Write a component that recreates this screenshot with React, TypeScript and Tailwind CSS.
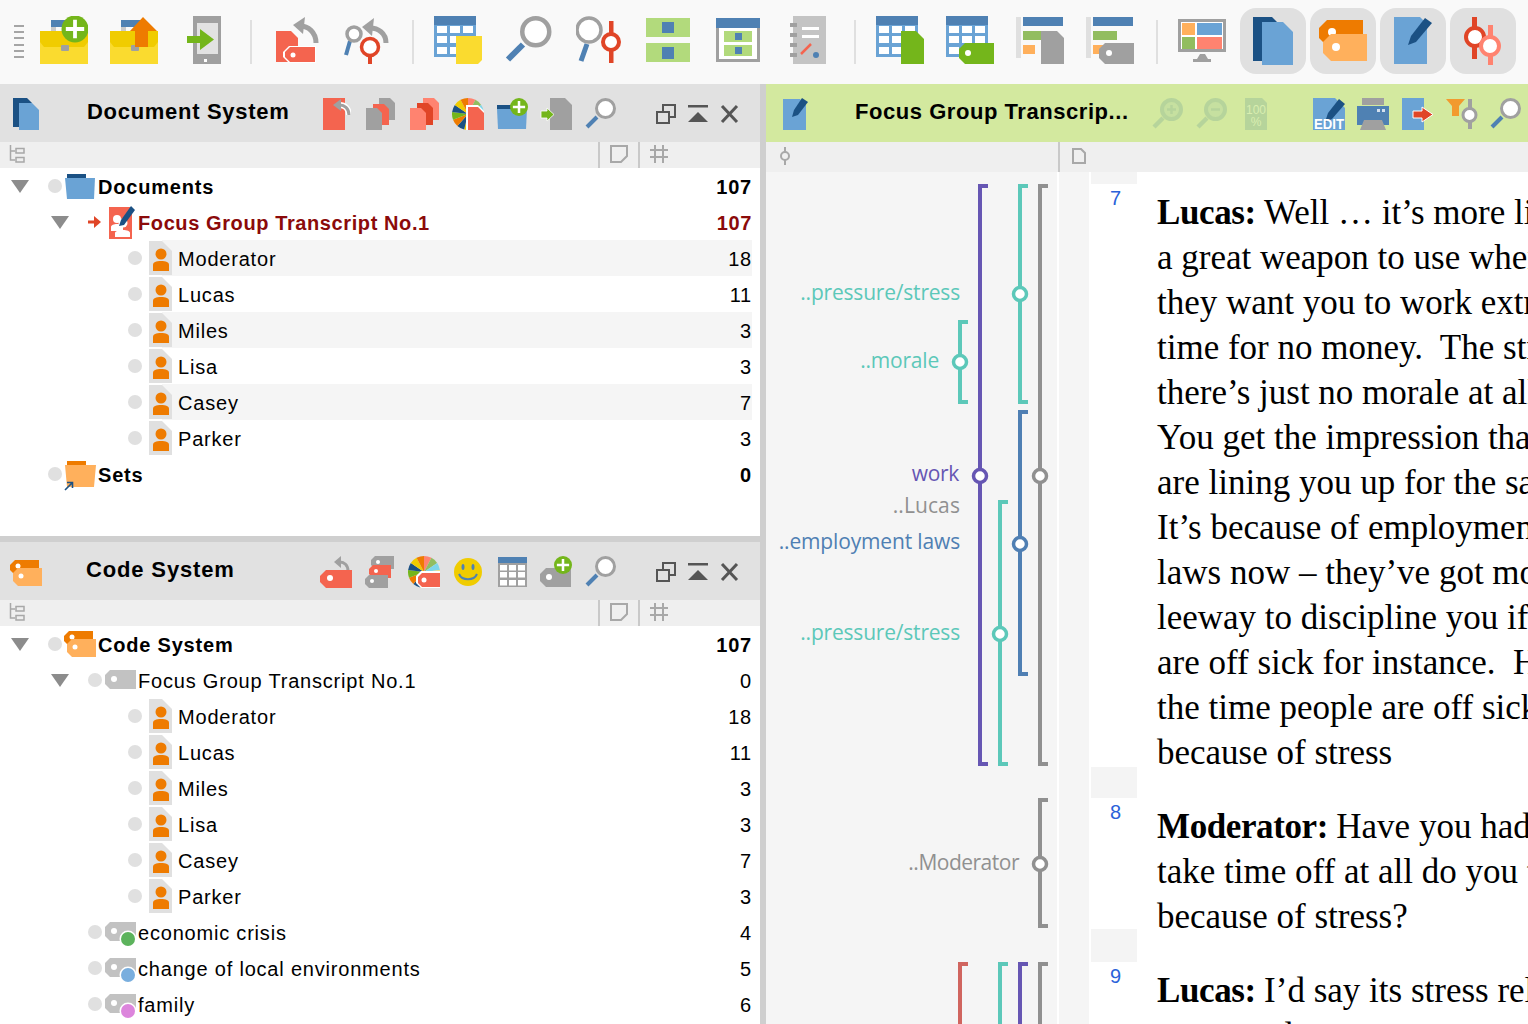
import React from 'react';

const RED = '#f4644f';
const DRED = '#e04527';
const SALMON = '#ff8370';
const GRAY = '#a0a0a0';
const BLUE = '#4f81b3';
const LBLUE = '#6aa3d5';
const DBLUE = '#1b5184';
const GREEN = '#74b61b';
const LGREEN = '#b2da7c';
const MGREEN = '#92bd5f';
const ORANGE = '#ee7b00';
const LORANGE = '#ffb05c';
const FADED = '#b6d49b';

// box is "x y w h" in picture coordinates, so the paths below can use them directly
function Ic({ box, className, scale = 1, children }: { box: string; className?: string; scale?: number; children: React.ReactNode }) {
  const [, , w, h] = box.split(' ').map(Number);
  return (
    <svg width={w * scale} height={h * scale} viewBox={box} className={`shrink-0 ${className ?? ''}`}>
      {children}
    </svg>
  );
}

function tagPts(x: number, y: number, w: number, h: number, c = 5) {
  return `${x + c},${y} ${x + w},${y} ${x + w},${y + h} ${x + c},${y + h} ${x},${y + h - c} ${x},${y + c}`;
}

function docPts(x: number, y: number, w: number, h: number, c = 7) {
  return `${x},${y} ${x + w - c},${y} ${x + w},${y + c} ${x + w},${y + h} ${x},${y + h}`;
}

function Plus({ cx, cy, r }: { cx: number; cy: number; r: number }) {
  return (
    <>
      <circle cx={cx} cy={cy} r={r} fill={GREEN} />
      <path d={`M${cx - r * 0.68} ${cy}H${cx + r * 0.68}M${cx} ${cy - r * 0.68}V${cy + r * 0.68}`} stroke="#fff" strokeWidth={r * 0.28} />
    </>
  );
}

function Mag({ className, scale = 1 }: { className?: string; scale?: number }) {
  return (
    <Ic box="0 0 32 32" className={className} scale={scale}>
      <path d="M12 19L2 29" stroke={BLUE} strokeWidth="4" />
      <circle cx="20.5" cy="10.5" r="9" fill="#fff" stroke={GRAY} strokeWidth="3" />
    </Ic>
  );
}

function ZoomFaded({ className, minus }: { className?: string; minus?: boolean }) {
  return (
    <Ic box="0 0 32 32" className={className}>
      <path d="M11 20L2 29" stroke={FADED} strokeWidth="4.5" />
      <circle cx="19.5" cy="11.5" r="9.5" fill="#c6e0a0" stroke={FADED} strokeWidth="4" />
      <path d={minus ? 'M15 11.5H24' : 'M15 11.5H24M19.5 7V16'} stroke={FADED} strokeWidth="2.5" />
    </Ic>
  );
}

function Case({ children, box }: { box: string; children: React.ReactNode }) {
  const x = Number(box.split(' ')[0]);
  return (
    <Ic box={box} className="ml-[22px]">
      <g transform={`translate(${x} 16)`}>
        <rect x="11" y="4" width="22" height="7" fill={BLUE} />
        <rect x="11" y="11" width="5" height="5" fill="#c9c9c9" />
        <rect x="0" y="15" width="48" height="33" fill="#fadb2f" />
        <polygon points="0,15 48,15 48,26 44,31 4,31 0,26" fill="#f0cc00" />
        <rect x="21" y="29" width="8" height="6" rx="1" fill={GRAY} />
      </g>
      {children}
    </Ic>
  );
}

function TableShape({ x, y }: { x: number; y: number }) {
  const cols = [3, 16, 29];
  const rows = [10, 20, 31];
  return (
    <g transform={`translate(${x} ${y})`}>
      <rect x="0" y="0" width="42" height="41" fill={LBLUE} />
      <rect x="0" y="0" width="42" height="9" fill={BLUE} />
      {cols.map((c) => rows.map((r) => <rect key={`${c}-${r}`} x={c} y={r} width="10" height="7" fill="#fff" />))}
    </g>
  );
}

function Pie({ cx, cy, r }: { cx: number; cy: number; r: number }) {
  const colors = ['#ff8370', '#92bd5f', '#7ed6ea', '#f2e27a', '#6aa3d5', '#f0cc00', '#f0cc00', '#1b5184', '#ee7b00', '#74b61b', '#1b5184', '#f0cc00', '#ee7b00'];
  return (
    <>
      {colors.map((c, i) => {
        const a0 = (i / colors.length) * Math.PI * 2 - Math.PI / 2;
        const a1 = ((i + 1) / colors.length) * Math.PI * 2 - Math.PI / 2;
        return (
          <path
            key={i}
            d={`M${cx} ${cy}L${cx + r * Math.cos(a0)} ${cy + r * Math.sin(a0)}A${r} ${r} 0 0 1 ${cx + r * Math.cos(a1)} ${cy + r * Math.sin(a1)}Z`}
            fill={c}
          />
        );
      })}
    </>
  );
}

function CodesIcon({ className }: { className?: string }) {
  return (
    <Ic box="0 0 32 28" className={className}>
      <polygon points={tagPts(0, 1, 29, 15, 5)} fill={ORANGE} />
      <circle cx="8" cy="7" r="2.5" fill="#fff" />
      <polygon points={tagPts(3, 9, 29, 18, 5)} fill={LORANGE} />
      <circle cx="11" cy="17" r="2.5" fill="#fff" />
    </Ic>
  );
}

function FolderIcon({ className, orange }: { className?: string; orange?: boolean }) {
  return (
    <Ic box="0 0 32 36" className={className}>
      <rect x="3" y={orange ? 5 : 6} width="19" height="5" fill={orange ? ORANGE : DBLUE} />
      <polygon points={orange ? '1,9 32,9 30,31 3,31' : '1,10 31,10 30,31 3,31'} fill={orange ? LORANGE : LBLUE} />
      {orange && <path d="M1 34L8 27M3 26.5H8.5V32" fill="none" stroke={DBLUE} strokeWidth="1.6" />}
    </Ic>
  );
}

function PersonDoc({ className }: { className?: string }) {
  return (
    <Ic box="0 0 23 34" className={className}>
      <polygon points={docPts(0, 0, 23, 34, 10)} fill="#e0e0e0" />
      <circle cx="12" cy="13" r="5.5" fill={ORANGE} />
      <path d="M4 30V24C4 21 7 20 12 20C17 20 20 21 20 24V30Z" fill={ORANGE} />
    </Ic>
  );
}

function FocusDoc({ className }: { className?: string }) {
  return (
    <Ic box="0 0 27 33" className={className}>
      <rect x="0" y="1" width="23" height="32" fill={RED} />
      <circle cx="8" cy="13" r="4" fill="#fff" />
      <path d="M2 25V21C2 19 5 18 8 18C11 18 14 19 14 21V25Z" fill="#fff" />
      <circle cx="14" cy="17" r="4.5" fill="#fff" />
      <path d="M6 31V27C6 25 10 24 14 24C18 24 21 25 21 27V31Z" fill="#fff" />
      <polygon points="22,0 26,4 15,19 10,20 12,14" fill={DBLUE} />
    </Ic>
  );
}

function GrayTag({ className, dot }: { className?: string; dot?: string }) {
  return (
    <Ic box="0 0 31 36" className={className}>
      <polygon points={tagPts(0, 8, 31, 19, 5)} fill="#c2c2c2" />
      <circle cx="9" cy="17" r="3" fill="#fff" />
      {dot && (
        <>
          <circle cx="23" cy="25" r="8.5" fill="#fff" />
          <circle cx="23" cy="25" r="7" fill={dot} />
        </>
      )}
    </Ic>
  );
}

function Tree() {
  return (
    <Ic box="0 0 16 18" className="ml-[9px] -mt-[3px]">
      <path d="M1.5 0V15H6M1.5 6H6M7 3.5H15V8H7ZM7 12.5H15V17H7Z" fill="none" stroke="#a8a8a8" strokeWidth="1.5" />
    </Ic>
  );
}

function WindowButtons() {
  return (
    <>
      <Ic box="0 0 20 20" className="ml-[39px] mt-[6px]">
        <path d="M1 8H13V19H1ZM7 7V1H19V13H13" fill="none" stroke="#555" strokeWidth="2" />
      </Ic>
      <Ic box="0 0 20 20" className="ml-[12px] mt-[6px]">
        <rect x="0" y="1" width="20" height="2.5" fill="#555" />
        <polygon points="10,8 20,18 0,18" fill="#555" />
      </Ic>
      <Ic box="0 0 20 20" className="ml-[11px] mt-[6px]">
        <path d="M3 2L18 18M18 2L3 18" stroke="#555" strokeWidth="3" />
      </Ic>
    </>
  );
}

function Row({ pad, tri, dot = true, lead, icon, label, count, bold, dark, striped, labelClass }: {
  pad: string;
  tri?: boolean;
  dot?: boolean;
  lead?: React.ReactNode;
  icon: React.ReactNode;
  label: string;
  count: number;
  bold?: boolean;
  dark?: boolean;
  striped?: boolean;
  labelClass: string;
}) {
  return (
    <div className={`flex h-9 w-[752px] shrink-0 items-center text-[20px] ${dark ? 'tracking-[0.6px]' : 'tracking-[0.8px]'} ${pad} ${striped ? 'bg-[linear-gradient(to_right,#fff_162px,#f5f5f5_162px)]' : ''} ${bold ? 'font-bold' : ''} ${dark ? 'text-[#8b0a0a]' : 'text-black'}`}>
      {tri && (
        <svg width="18" height="13" className="mr-[19px] shrink-0">
          <polygon points="0,0 18,0 9,13" fill="#8c8c8c" />
        </svg>
      )}
      {lead}
      {dot && <span className="h-[14px] w-[14px] shrink-0 rounded-full bg-[#e0e0e0]" />}
      {icon}
      <span className={`mt-[2px] ${labelClass}`}>{label}</span>
      <span className="ml-auto mt-[2px]">{count}</span>
    </div>
  );
}

function ColumnBar({ className }: { className: string }) {
  return (
    <div className={`flex h-[26px] items-center bg-[#efefef] ${className}`}>
      <Tree />
      <div className="ml-[573px] h-full w-[2px] bg-[#c9c9c9]" />
      <Ic box="0 0 18 18" className="ml-[10px] -mt-[3px]">
        <path d="M1 1H17V11L11 17H1Z" fill="none" stroke="#a8a8a8" strokeWidth="2" />
      </Ic>
      <div className="ml-[10px] h-full w-[2px] bg-[#c9c9c9]" />
      <Ic box="0 0 18 18" className="ml-[10px] -mt-[3px]">
        <path d="M5 0V18M13 0V18M0 5H18M0 12H18" stroke="#a8a8a8" strokeWidth="2" />
      </Ic>
    </div>
  );
}

const people: { name: string; n: number }[] = [
  { name: 'Moderator', n: 18 },
  { name: 'Lucas', n: 11 },
  { name: 'Miles', n: 3 },
  { name: 'Lisa', n: 3 },
  { name: 'Casey', n: 7 },
  { name: 'Parker', n: 3 },
];

function Toolbar() {
  return (
    <div className="flex h-[84px] shrink-0 items-start bg-[#f9f9f9] pl-[14px] pt-[16px]">
      <Ic box="0 0 10 34" className="mt-[9px]">
        {[0, 6, 12, 19, 25, 31].map((y) => <rect key={y} x="0" y={y} width="10" height="2" fill="#a5a5a5" />)}
      </Ic>
      <div className="-ml-[6px]">
        <Case box="40 16 48 48"><Plus cx={75} cy={29} r={13.5} /></Case>
      </div>
      <Case box="110 16 48 48">
        <polygon points="143,17 157,31 148,31 148,47 135,47 135,31 130,31" fill={ORANGE} />
      </Case>
      <Ic box="187 16 34 48" className="ml-[29px]">
        <rect x="193" y="16" width="28" height="48" fill={GRAY} />
        <rect x="197" y="23" width="21" height="31" fill="#e2e2e2" />
        <rect x="204" y="59" width="3" height="3" fill="#fff" />
        <polygon points="187,36 200,36 200,29 214,39.5 200,50 200,43 187,43" fill={GREEN} />
      </Ic>
      <div className="ml-[29px] mt-[4px] h-[44px] w-[2px] bg-[#e0e0e0]" />
      <Ic box="276 16 44 48" className="ml-[24px]">
        <polygon points={docPts(276, 31, 22, 31)} fill={RED} />
        <polygon points={tagPts(283, 46, 33, 17, 6)} fill="#fff" />
        <polygon points={tagPts(285, 47, 30, 15, 5)} fill={RED} />
        <circle cx="293" cy="55" r="2.5" fill="#fff" />
        <path d="M316 43C316 32 308 26 300 26" fill="none" stroke={GRAY} strokeWidth="5" />
        <polygon points="293,25 305,17 303,34" fill={GRAY} />
      </Ic>
      <Ic box="343 16 46 48" className="ml-[23px]">
        <path d="M386 43C386 33 378 28 370 28" fill="none" stroke={GRAY} strokeWidth="5" />
        <polygon points="362,27 374,18 372,36" fill={GRAY} />
        <path d="M350 41L346 55" stroke={BLUE} strokeWidth="4" />
        <circle cx="354" cy="34" r="7" fill="#fff" stroke={GRAY} strokeWidth="3.5" />
        <rect x="368" y="50" width="4" height="14" fill={DRED} />
        <circle cx="370" cy="47" r="8.5" fill="#fff" stroke={DRED} strokeWidth="3.5" />
      </Ic>
      <div className="ml-[23px] mt-[4px] h-[44px] w-[2px] bg-[#e0e0e0]" />
      <Ic box="434 16 48 48" className="ml-[20px]">
        <TableShape x={434} y={16} />
        <polygon points="456,36 482,36 482,60 478,64 456,64" fill="#fadb2f" />
      </Ic>
      <Mag className="ml-[23px]" scale={1.5} />
      <Ic box="576 16 46 48" className="ml-[23px]">
        <path d="M587 44L581 61" stroke={BLUE} strokeWidth="5" />
        <circle cx="589" cy="30" r="12" fill="#fff" stroke={GRAY} strokeWidth="3.5" />
        <rect x="609" y="21" width="4.5" height="42" fill={DRED} />
        <circle cx="611" cy="42" r="8" fill="#fff" stroke={DRED} strokeWidth="4" />
      </Ic>
      <Ic box="646 18 44 44" className="ml-[24px] mt-[2px]">
        <rect x="646" y="18" width="44" height="19" fill={LGREEN} />
        <rect x="646" y="43" width="44" height="19" fill={LGREEN} />
        <rect x="662" y="22" width="12" height="11" fill={BLUE} />
        <rect x="662" y="47" width="12" height="12" fill={BLUE} />
      </Ic>
      <Ic box="716 18 44 44" className="ml-[26px] mt-[2px]">
        <rect x="716" y="18" width="44" height="44" fill={GRAY} />
        <rect x="719" y="28" width="38" height="31" fill="#fff" />
        <rect x="716" y="18" width="44" height="10" fill={BLUE} />
        <rect x="724" y="31" width="28" height="11" fill={LGREEN} />
        <rect x="724" y="45" width="28" height="11" fill={LGREEN} />
        <rect x="735" y="33" width="7" height="7" fill={BLUE} />
        <rect x="735" y="47" width="7" height="7" fill={BLUE} />
      </Ic>
      <Ic box="790 16 36 48" className="ml-[30px]">
        <rect x="793" y="16" width="33" height="48" fill="#c4c4c4" />
        {[25, 35, 45, 55].map((y) => <rect key={y} x="790" y={y - 2} width="7" height="4" fill={GRAY} />)}
        <rect x="802" y="27" width="17" height="3" fill="#fff" />
        <rect x="802" y="35" width="17" height="3" fill="#fff" />
        <path d="M801 54L811 44" stroke={RED} strokeWidth="2.5" />
        <circle cx="816" cy="55" r="3" fill={BLUE} />
      </Ic>
      <div className="ml-[28px] mt-[4px] h-[44px] w-[2px] bg-[#e0e0e0]" />
      <Ic box="876 16 48 48" className="ml-[20px]">
        <TableShape x={876} y={16} />
        <polygon points={docPts(901, 31, 23, 33, 8)} fill={GREEN} />
      </Ic>
      <Ic box="946 16 48 48" className="ml-[22px]">
        <TableShape x={946} y={16} />
        <polygon points={tagPts(959, 43, 35, 21, 6)} fill={GREEN} />
        <circle cx="968" cy="53" r="3" fill="#fff" />
      </Ic>
      <Ic box="1016 16 48 48" className="ml-[22px]">
        <rect x="1016" y="17" width="5" height="41" fill="#e0e0e0" />
        <rect x="1023" y="17" width="40" height="9" fill={BLUE} />
        <rect x="1023" y="31" width="24" height="9" fill={MGREEN} />
        <rect x="1023" y="45" width="12" height="9" fill={LORANGE} />
        <polygon points={docPts(1041, 31, 23, 33)} fill={GRAY} />
      </Ic>
      <Ic box="1086 16 48 48" className="ml-[22px]">
        <rect x="1086" y="17" width="5" height="41" fill="#e0e0e0" />
        <rect x="1093" y="17" width="40" height="9" fill={BLUE} />
        <rect x="1093" y="31" width="24" height="9" fill={MGREEN} />
        <rect x="1093" y="45" width="12" height="9" fill={LORANGE} />
        <polygon points={tagPts(1099, 43, 35, 21, 6)} fill={GRAY} />
        <circle cx="1109" cy="53" r="3" fill="#fff" />
      </Ic>
      <div className="ml-[22px] mt-[4px] h-[44px] w-[2px] bg-[#e0e0e0]" />
      <Ic box="1178 16 48 48" className="ml-[20px]">
        <rect x="1178" y="19" width="48" height="33" fill={GRAY} />
        <rect x="1181" y="22" width="42" height="27" fill="#fff" />
        <rect x="1182" y="23" width="13" height="12" fill={LORANGE} />
        <rect x="1197" y="23" width="25" height="12" fill={LBLUE} />
        <rect x="1182" y="37" width="13" height="12" fill={MGREEN} />
        <rect x="1197" y="37" width="25" height="12" fill={SALMON} />
        <path d="M1197 59L1200 54H1205L1208 59H1211V62H1193V59Z" fill={GRAY} />
      </Ic>
      <div className="ml-[14px] -mt-[8px] flex gap-[4px]">
        <div className="flex h-[66px] w-[66px] items-center justify-center rounded-[16px] bg-[#e0e0e0]">
          <Ic box="1252 16 40 48">
            <polygon points={docPts(1252, 16, 26, 44, 7)} fill={DBLUE} />
            <polygon points={docPts(1261, 21, 31, 43, 10)} fill={LBLUE} />
          </Ic>
        </div>
        <div className="flex h-[66px] w-[66px] items-center justify-center rounded-[16px] bg-[#e0e0e0]">
          <Ic box="1318 20 48 42">
            <polygon points={tagPts(1318, 20, 44, 26, 8)} fill={ORANGE} />
            <circle cx="1331" cy="32" r="4" fill="#fff" />
            <polygon points={tagPts(1322, 34, 44, 27, 8)} fill={LORANGE} />
            <circle cx="1335" cy="47" r="4" fill="#fff" />
          </Ic>
        </div>
        <div className="flex h-[66px] w-[66px] items-center justify-center rounded-[16px] bg-[#e0e0e0]">
          <Ic box="1394 17 38 48">
            <polygon points={docPts(1394, 17, 33, 47, 7)} fill={LBLUE} />
            <polygon points="1425,18 1432,23 1416,42 1408,45 1411,36" fill={DBLUE} />
          </Ic>
        </div>
        <div className="flex h-[66px] w-[66px] items-center justify-center rounded-[16px] bg-[#e0e0e0]">
          <Ic box="1464 16 38 48">
            <rect x="1472" y="16" width="5" height="42" fill={DRED} />
            <circle cx="1475" cy="36" r="9" fill="#fff" stroke={DRED} strokeWidth="4" />
            <rect x="1488" y="24" width="5" height="40" fill={SALMON} />
            <circle cx="1490" cy="45" r="9" fill="#fff" stroke={SALMON} strokeWidth="4" />
          </Ic>
        </div>
      </div>
    </div>
  );
}

function DocPanel() {
  return (
    <div className="flex h-[452px] shrink-0 flex-col bg-white">
      <div className="flex h-[58px] shrink-0 items-start bg-[#e1e1e1] pt-[14px]">
        <Ic box="13 98 26 32" className="ml-[13px]">
          <polygon points={docPts(13, 98, 19, 29, 5)} fill={DBLUE} />
          <polygon points={docPts(19, 103, 20, 27, 7)} fill={LBLUE} />
        </Ic>
        <div className="ml-[48px] w-[236px] text-[22px] font-bold leading-[28px] tracking-[0.7px] text-black">Document System</div>
        <Ic box="323 98 28 32">
          <polygon points="323,98 345,98 345,130 323,130" fill={RED} />
          <path d="M349 115C349 108 344 105 340 105" fill="none" stroke="#fff" strokeWidth="6" />
          <path d="M349 115C349 108 344 105 340 105" fill="none" stroke={GRAY} strokeWidth="3" />
          <polygon points="333,105 341,99 341,111" fill={GRAY} />
        </Ic>
        <Ic box="366 98 29 32" className="ml-[15px]">
          <polygon points={docPts(379, 98, 16, 22, 5)} fill={GRAY} />
          <polygon points={docPts(373, 104, 16, 21, 5)} fill={RED} />
          <polygon points={docPts(366, 108, 16, 22, 5)} fill={GRAY} />
        </Ic>
        <Ic box="410 98 29 32" className="ml-[15px]">
          <polygon points={docPts(423, 98, 16, 22, 5)} fill={SALMON} />
          <polygon points={docPts(417, 103, 16, 22, 5)} fill={DRED} />
          <polygon points={docPts(410, 108, 16, 22, 5)} fill={SALMON} />
        </Ic>
        <Ic box="452 98 32 32" className="ml-[13px]">
          <Pie cx={468} cy={114} r={16} />
          <polygon points={docPts(466, 105, 18, 25, 6)} fill="#fff" />
          <polygon points={docPts(468, 107, 16, 23, 6)} fill={RED} />
        </Ic>
        <Ic box="497 98 32 32" className="ml-[13px]">
          <rect x="497" y="105" width="29" height="4" fill={DBLUE} />
          <polygon points="497,109 527,109 526,129 498,129" fill={LBLUE} />
          <Plus cx={519} cy={107} r={9} />
        </Ic>
        <Ic box="540 98 32 32" className="ml-[11px]">
          <polygon points={docPts(550, 98, 22, 32, 7)} fill={GRAY} />
          <polygon points="547,108 554,114.5 547,121 547,118 541,118 541,111 547,111" fill={GREEN} stroke="#fff" strokeWidth="0.8" />
        </Ic>
        <Mag className="ml-[13px]" />
        <WindowButtons />
      </div>
      <ColumnBar className="shrink-0" />
      <Row pad="pl-[11px]" tri icon={<FolderIcon className="ml-[2px]" />} label="Documents" count={107} bold labelClass="ml-[2px]" />
      <Row
        pad="pl-[51px]"
        tri
        dot={false}
        lead={
          <svg width="13" height="12" className="shrink-0">
            <path d="M0 6H7" stroke={DRED} strokeWidth="3" />
            <polygon points="6,0 13,6 6,12" fill={DRED} />
          </svg>
        }
        icon={<FocusDoc className="ml-[8px]" />}
        label="Focus Group Transcript No.1"
        count={107}
        bold
        dark
        labelClass="ml-[2px]"
      />
      {people.map((p, i) => (
        <Row key={p.name} pad="pl-[128px]" striped={i % 2 === 0} icon={<PersonDoc className="ml-[7px]" />} label={p.name} count={p.n} labelClass="ml-[6px]" />
      ))}
      <Row pad="pl-[48px]" icon={<FolderIcon className="ml-[2px]" orange />} label="Sets" count={0} bold labelClass="ml-[2px]" />
    </div>
  );
}

function CodePanel() {
  return (
    <div className="flex min-h-0 flex-1 flex-col overflow-hidden bg-white">
      <div className="flex h-[58px] shrink-0 items-start bg-[#e1e1e1] pt-[14px]">
        <CodesIcon className="ml-[10px] mt-[3px]" />
        <div className="ml-[44px] w-[234px] text-[22px] font-bold leading-[28px] tracking-[0.85px] text-black">Code System</div>
        <Ic box="320 556 32 32">
          <path d="M348 571C348 565 344 562 340 562" fill="none" stroke={GRAY} strokeWidth="3" />
          <polygon points="334,562 341,556 341,568" fill={GRAY} />
          <polygon points={tagPts(320, 570, 32, 18, 6)} fill={RED} />
          <circle cx="330" cy="578" r="3" fill="#fff" />
        </Ic>
        <Ic box="365 556 30 32" className="ml-[13px]">
          <polygon points={tagPts(371, 556, 23, 13, 4)} fill={GRAY} />
          <circle cx="378" cy="562" r="2" fill="#fff" />
          <polygon points={tagPts(369, 565, 22, 13, 4)} fill={RED} />
          <circle cx="376" cy="571" r="2" fill="#fff" />
          <polygon points={tagPts(365, 575, 23, 13, 4)} fill={GRAY} />
          <circle cx="372" cy="581" r="2" fill="#fff" />
        </Ic>
        <Ic box="408 556 32 32" className="ml-[13px]">
          <Pie cx={424} cy={572} r={16} />
          <polygon points={tagPts(416, 571, 24, 17, 5)} fill="#fff" />
          <polygon points={tagPts(418, 573, 22, 14, 4)} fill={RED} />
          <circle cx="424" cy="580" r="2.5" fill="#fff" />
        </Ic>
        <Ic box="454 556 28 32" className="ml-[14px]">
          <circle cx="468" cy="572" r="14" fill="#f0cc00" />
          <ellipse cx="463" cy="567" rx="1.5" ry="3" fill={BLUE} />
          <ellipse cx="473" cy="567" rx="1.5" ry="3" fill={BLUE} />
          <path d="M459 574C462 581 474 581 477 574" fill="none" stroke={BLUE} strokeWidth="2" />
        </Ic>
        <Ic box="498 556 30 32" className="ml-[16px]">
          <rect x="498" y="557" width="29" height="30" fill={GRAY} />
          <rect x="498" y="557" width="29" height="6" fill={BLUE} />
          {[500, 509, 518].map((x) => [565, 572, 580].map((y) => <rect key={`${x}-${y}`} x={x} y={y} width="7" height="5.5" fill="#fff" />))}
        </Ic>
        <Ic box="540 556 32 32" className="ml-[12px]">
          <polygon points={tagPts(540, 568, 31, 19, 6)} fill={GRAY} />
          <circle cx="549" cy="577" r="3" fill="#fff" />
          <Plus cx={563} cy={565} r={9} />
        </Ic>
        <Mag className="ml-[13px]" />
        <WindowButtons />
      </div>
      <ColumnBar className="shrink-0" />
      <Row pad="pl-[11px]" tri icon={<CodesIcon className="ml-[2px]" />} label="Code System" count={107} bold labelClass="ml-[2px]" />
      <Row pad="pl-[51px]" tri icon={<GrayTag className="ml-[3px]" />} label="Focus Group Transcript No.1" count={0} labelClass="ml-[2px]" />
      {people.map((p) => (
        <Row key={p.name} pad="pl-[128px]" icon={<PersonDoc className="ml-[7px]" />} label={p.name} count={p.n} labelClass="ml-[6px]" />
      ))}
      <Row pad="pl-[88px]" icon={<GrayTag className="ml-[3px]" dot="#5cb35c" />} label="economic crisis" count={4} labelClass="ml-[2px]" />
      <Row pad="pl-[88px]" icon={<GrayTag className="ml-[3px]" dot="#79aede" />} label="change of local environments" count={5} labelClass="ml-[2px]" />
      <Row pad="pl-[88px]" icon={<GrayTag className="ml-[3px]" dot="#dc85dc" />} label="family" count={6} labelClass="ml-[2px]" />
    </div>
  );
}

const TEAL = '#5cc8b9';
const PURPLE = '#6656b3';
const SBLUE = '#4f7fb3';
const SGRAY = '#909090';

const stripes: { x: number; y1: number; y2: number; c: string; my?: number }[] = [
  { x: 978, y1: 184, y2: 766, c: PURPLE, my: 476 },
  { x: 1018, y1: 184, y2: 404, c: TEAL, my: 294 },
  { x: 1038, y1: 184, y2: 766, c: SGRAY, my: 476 },
  { x: 958, y1: 320, y2: 404, c: TEAL, my: 362 },
  { x: 1018, y1: 410, y2: 676, c: SBLUE, my: 544 },
  { x: 998, y1: 500, y2: 766, c: TEAL, my: 634 },
  { x: 1038, y1: 798, y2: 928, c: SGRAY, my: 864 },
  { x: 958, y1: 962, y2: 1040, c: '#d0655f' },
  { x: 998, y1: 962, y2: 1040, c: TEAL },
  { x: 1018, y1: 962, y2: 1040, c: PURPLE },
  { x: 1038, y1: 962, y2: 1040, c: SGRAY },
];

const labels = [
  { t: '..pressure/stress', cls: 'right-[97px] top-[106px] tracking-[-0.2px] text-[#5cc8b9]' },
  { t: '..morale', cls: 'right-[118px] top-[174px] tracking-[-0.2px] text-[#5cc8b9]' },
  { t: 'work', cls: 'right-[98px] top-[287px] tracking-[-0.3px] text-[#6656b3]' },
  { t: '..Lucas', cls: 'right-[97px] top-[319px] tracking-[0.1px] text-[#909090]' },
  { t: '..employment laws', cls: 'right-[97px] top-[355px] tracking-[-0.15px] text-[#4f7fb3]' },
  { t: '..pressure/stress', cls: 'right-[97px] top-[446px] tracking-[-0.2px] text-[#5cc8b9]' },
  { t: '..Moderator', cls: 'right-[38px] top-[676px] tracking-[-0.5px] text-[#909090]' },
];

function CodingMargin() {
  return (
    <div className="relative w-[291px] shrink-0 bg-[#f5f5f5]">
      <svg width="291" height="852" viewBox="766 172 291 852" className="absolute left-0 top-0">
        {stripes.map((s, i) => (
          <g key={i}>
            <path d={`M${s.x + 10} ${s.y1 + 2}H${s.x + 2}V${s.y2 - 2}H${s.x + 10}`} fill="none" stroke={s.c} strokeWidth="4" />
            {s.my && <circle cx={s.x + 2} cy={s.my} r="6.5" fill="#fff" stroke={s.c} strokeWidth="3.5" />}
          </g>
        ))}
      </svg>
      {labels.map((l, i) => (
        <div key={i} className={`absolute whitespace-nowrap text-[21px] leading-[28px] font-['Open_Sans',sans-serif] ${l.cls}`}>
          {l.t}
        </div>
      ))}
    </div>
  );
}

function Para({ n, heightClass, who, lines }: { n: number; heightClass: string; who: string; lines: string[] }) {
  return (
    <div className={`flex shrink-0 bg-white ${heightClass}`}>
      <div className="w-[48px] shrink-0 pl-[19px] font-['Liberation_Sans',sans-serif] text-[20px] leading-[28px] text-[#2a62d9]">{n}</div>
      <div className="min-w-0 flex-1 overflow-hidden pl-[18px] pt-[6px] font-['Liberation_Serif',serif] text-[35px] leading-[45px] text-black">
        {lines.map((l, i) => (
          <div key={i} className="whitespace-pre">
            {i === 0 && <b className="tracking-[-0.4px]">{who} </b>}
            {l}
          </div>
        ))}
      </div>
    </div>
  );
}

function Gap({ h }: { h: string }) {
  return (
    <div className={`shrink-0 ${h}`}>
      <div className="h-full w-[46px] bg-[#f4f4f4]" />
    </div>
  );
}

function FocusPanel() {
  return (
    <div className="flex min-w-0 flex-1 flex-col">
      <div className="flex h-[58px] shrink-0 items-start bg-[#d3e99f] pt-[14px]">
        <Ic box="783 98 25 32" className="ml-[17px]">
          <polygon points={docPts(783, 99, 23, 31, 6)} fill={LBLUE} />
          <polygon points="802,98 808,102 798,115 792,117 794,110" fill={DBLUE} />
        </Ic>
        <div className="ml-[47px] w-[297px] text-[22px] font-bold leading-[28px] tracking-[0.55px] text-black">Focus Group Transcrip...</div>
        <ZoomFaded />
        <ZoomFaded className="ml-[12px]" minus />
        <Ic box="1244 98 22 32" className="ml-[17px]">
          <polygon points={docPts(1244, 98, 22, 32, 5)} fill={FADED} />
          <text x="1255" y="114" textAnchor="middle" fontSize="12" fontFamily="Liberation Sans, sans-serif" fill="#d9eeb0">100</text>
          <text x="1255" y="126" textAnchor="middle" fontSize="12" fontFamily="Liberation Sans, sans-serif" fill="#d9eeb0">%</text>
        </Ic>
        <Ic box="1312 98 32 32" className="ml-[46px]">
          <polygon points={docPts(1312, 98, 32, 32, 10)} fill={LBLUE} />
          <polygon points="1338,99 1344,104 1331,119 1324,122 1327,113" fill={DBLUE} />
          <text x="1313" y="129" fontSize="14" fontWeight="bold" fontFamily="Liberation Sans, sans-serif" fill="#fff" textLength="30" lengthAdjust="spacingAndGlyphs">EDIT</text>
        </Ic>
        <Ic box="1356 98 32 32" className="ml-[12px]">
          <rect x="1361" y="98" width="22" height="7" fill={GRAY} />
          <rect x="1356" y="106" width="32" height="19" fill={BLUE} />
          <rect x="1376" y="109" width="3" height="3" fill="#d3e0ee" />
          <rect x="1381" y="109" width="3" height="3" fill="#d3e0ee" />
          <polygon points="1363,120 1381,120 1381,121 1363,121" fill="#fff" />
          <polygon points="1363,120 1381,120 1385,130 1359,130" fill={GRAY} />
        </Ic>
        <Ic box="1401 98 31 32" className="ml-[13px]">
          <rect x="1401" y="98" width="22" height="32" fill={LBLUE} />
          <polygon points="1412,111 1421,111 1421,107 1432,114.5 1421,122 1421,118 1412,118" fill={DRED} stroke="#fff" strokeWidth="1" />
        </Ic>
        <Ic box="1445 98 32 32" className="ml-[13px]">
          <polygon points="1445,99 1464,99 1458,106 1458,116 1451,116 1451,106" fill="#f29a2e" />
          <rect x="1467" y="99" width="4" height="30" fill={GRAY} />
          <circle cx="1468.5" cy="115" r="6.5" fill="#fff" stroke={GRAY} strokeWidth="3" />
        </Ic>
        <Mag className="ml-[12px]" />
      </div>
      <div className="flex h-[30px] shrink-0 items-center bg-[#efefef]">
        <Ic box="0 0 12 18" className="ml-[13px] -mt-[3px]">
          <path d="M6 0V18" stroke="#a8a8a8" strokeWidth="2" />
          <circle cx="6" cy="9" r="4" fill="#efefef" stroke="#a8a8a8" strokeWidth="2" />
        </Ic>
        <div className="ml-[267px] h-full w-[2px] bg-[#c9c9c9]" />
        <Ic box="0 0 14 16" className="ml-[12px] -mt-[3px]">
          <path d="M1 1H9L13 5V15H1Z" fill="none" stroke="#a8a8a8" strokeWidth="2" />
        </Ic>
      </div>
      <div className="flex min-h-0 flex-1">
        <CodingMargin />
        <div className="w-[2px] shrink-0 bg-white" />
        <div className="w-[30px] shrink-0 bg-[#f5f5f5]" />
        <div className="w-[2px] shrink-0 bg-white" />
        <div className="flex min-w-0 flex-1 flex-col bg-white">
          <Gap h="h-[12px]" />
          <Para
            n={7}
            heightClass="h-[583px]"
            who="Lucas:"
            lines={[
              'Well … it’s more like',
              'a great weapon to use when',
              'they want you to work extra',
              'time for no money.  The stress',
              'there’s just no morale at all.',
              'You get the impression that',
              'are lining you up for the sack.',
              'It’s because of employment',
              'laws now – they’ve got more',
              'leeway to discipline you if you',
              'are off sick for instance.  How',
              'the time people are off sick',
              'because of stress',
            ]}
          />
          <Gap h="h-[31px]" />
          <Para
            n={8}
            heightClass="h-[131px]"
            who="Moderator:"
            lines={['Have you had to', 'take time off at all do you think', 'because of stress?']}
          />
          <Gap h="h-[33px]" />
          <Para n={9} heightClass="h-[120px]" who="Lucas:" lines={['I’d say its stress related', 'to some degree, yes']} />
        </div>
      </div>
    </div>
  );
}

export default function App() {
  return (
    <div className="flex h-screen w-screen flex-col overflow-hidden bg-white font-['Liberation_Sans',sans-serif]">
      <Toolbar />
      <div className="flex min-h-0 flex-1">
        <div className="flex w-[760px] shrink-0 flex-col">
          <DocPanel />
          <div className="h-[6px] shrink-0 bg-[#cfcfcf]" />
          <CodePanel />
        </div>
        <div className="w-[6px] shrink-0 bg-[#cfcfcf]" />
        <FocusPanel />
      </div>
    </div>
  );
}
